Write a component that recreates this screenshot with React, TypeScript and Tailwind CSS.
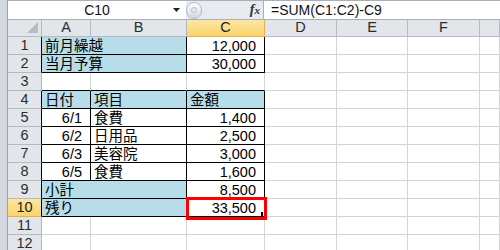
import React from 'react';

type Cell = {
  t?: string;
  span?: number;
  fill?: boolean;
  right?: boolean;
  br?: boolean;
  bb?: boolean;
};

type Row = { n: number; cells: Cell[]; edge?: boolean; active?: boolean };

const COLS = ['A', 'B', 'C', 'D', 'E', 'F', ''];

const boxed = (t: string, fill = false, right = false): Cell => ({ t, fill, right, br: true, bb: true });

const ROWS: Row[] = [
  { n: 1, edge: true, cells: [{ ...boxed('前月繰越', true), span: 2 }, boxed('12,000', false, true)] },
  { n: 2, edge: true, cells: [{ ...boxed('当月予算', true), span: 2 }, boxed('30,000', false, true)] },
  { n: 3, cells: [{ bb: true }, { bb: true }, { bb: true }] },
  { n: 4, edge: true, cells: [boxed('日付', true), boxed('項目', true), boxed('金額', true)] },
  { n: 5, edge: true, cells: [boxed('6/1', false, true), boxed('食費'), boxed('1,400', false, true)] },
  { n: 6, edge: true, cells: [boxed('6/2', false, true), boxed('日用品'), boxed('2,500', false, true)] },
  { n: 7, edge: true, cells: [boxed('6/3', false, true), boxed('美容院'), boxed('3,000', false, true)] },
  { n: 8, edge: true, cells: [boxed('6/5', false, true), boxed('食費'), boxed('1,600', false, true)] },
  { n: 9, edge: true, cells: [{ ...boxed('小計', true), span: 2 }, boxed('8,500', false, true)] },
  { n: 10, edge: true, active: true, cells: [{ ...boxed('残り', true), span: 2 }, boxed('33,500', false, true)] },
  { n: 11, cells: [] },
  { n: 12, cells: [] },
];

function GridCell({ cell }: { cell: Cell }) {
  return (
    <div
      className={`h-[18px] border-r border-b overflow-visible whitespace-nowrap leading-[18px] text-black ${
        cell.span === 2 ? 'col-span-2' : ''
      } ${cell.fill ? 'bg-[#b7dee8]' : 'bg-white'} ${cell.br ? 'border-r-black' : 'border-r-[#d4d4d4]'} ${
        cell.bb ? 'border-b-black' : 'border-b-[#d4d4d4]'
      } ${cell.right ? 'text-right pr-[8px]' : 'pl-[3px]'}`}
    >
      {cell.t}
    </div>
  );
}

export default function App() {
  return (
    <div className="w-[500px] h-[250px] overflow-hidden flex bg-white font-['Liberation_Sans','Noto_Sans_CJK_JP',sans-serif] text-[14.5px]">
      {/* window edge */}
      <div className="w-[8px] shrink-0 bg-[#d3d8de] border-r border-[#9aa3ad]" />

      <div className="flex-1 flex flex-col min-w-0">
        <div className="h-[5px] bg-[#eef1f4] border-b border-[#a7afb8]" />

        {/* formula bar */}
        <div className="h-[18px] flex">
          <div className="w-[178px] bg-white relative flex items-center justify-center text-[14px] text-[#111]">
            C10
            <svg className="absolute right-[6px] top-[7px]" width="7" height="4" viewBox="0 0 7 4">
              <polygon points="0,0 7,0 3.5,4" fill="#222" />
            </svg>
          </div>
          <div className="w-[77px] bg-[#e7eaee] flex items-center justify-between pr-[3px]">
            <div className="w-[16px] h-[17px] rounded-full border border-[#b3bac3] bg-gradient-to-b from-white to-[#d3d8df] flex items-center justify-center">
              <div className="w-[6px] h-[6px] rounded-full border border-[#b8bec6] bg-[#e8ebef]" />
            </div>
            <span className="font-['Liberation_Serif',serif] italic font-bold text-[14px] text-[#333] leading-none">
              f<span className="text-[11px]">x</span>
            </span>
          </div>
          <div className="flex-1 bg-white border-l border-[#a7afb8] pl-[7px] text-[14px] leading-[18px] text-[#111]">
            =SUM(C1:C2)-C9
          </div>
        </div>

        <div className="h-[5px] bg-[#e4e7eb] border-t border-[#a7afb8]" />

        {/* sheet */}
        <div className="relative">
          <div className="grid grid-cols-[34px_49px_96px_78px_72px_71px_72px_1fr]">
            {/* column header row */}
            <div className="h-[17px] bg-[#e2e6eb] border-r border-b border-[#b4bac1] relative">
              <svg className="absolute right-[3px] bottom-[3px]" width="11" height="11" viewBox="0 0 11 11">
                <polygon points="11,0 11,11 0,11" fill="#b7bdc4" />
              </svg>
            </div>
            {COLS.map((c, i) => (
              <div
                key={i}
                className={`h-[17px] border-r border-b flex items-center justify-center text-[14.5px] ${
                  c === 'C'
                    ? 'bg-gradient-to-b from-[#fde6a3] to-[#f9d46a] border-[#e9b04c] text-[#222]'
                    : 'bg-[#e2e6eb] border-[#b4bac1] text-[#2a2c2e]'
                }`}
              >
                {c}
              </div>
            ))}

            {ROWS.map((row) => {
              const used = row.cells.reduce((s, c) => s + (c.span ?? 1), 0);
              const blanks: Cell[] = Array.from({ length: 7 - used }, () => ({}));
              return (
                <React.Fragment key={row.n}>
                  <div
                    className={`h-[18px] border-b flex items-center justify-center ${
                      row.active
                        ? 'bg-gradient-to-b from-[#fde6a3] to-[#f9d46a] border-b-[#e9b04c] text-[#222]'
                        : 'bg-[#e2e6eb] border-b-[#b4bac1] text-[#2a2c2e]'
                    } border-r ${row.edge ? 'border-r-black' : 'border-r-[#b4bac1]'}`}
                  >
                    {row.n}
                  </div>
                  {[...row.cells, ...blanks].map((cell, i) => (
                    <GridCell key={i} cell={cell} />
                  ))}
                </React.Fragment>
              );
            })}
          </div>

          {/* highlight around C10 */}
          <div className="absolute left-[178px] top-[177px] w-[81px] h-[23px] border-[3px] border-[#ff0000]" />
          <div className="absolute left-[253px] top-[192px] w-[2px] h-[5px] bg-black" />
        </div>
      </div>
    </div>
  );
}
